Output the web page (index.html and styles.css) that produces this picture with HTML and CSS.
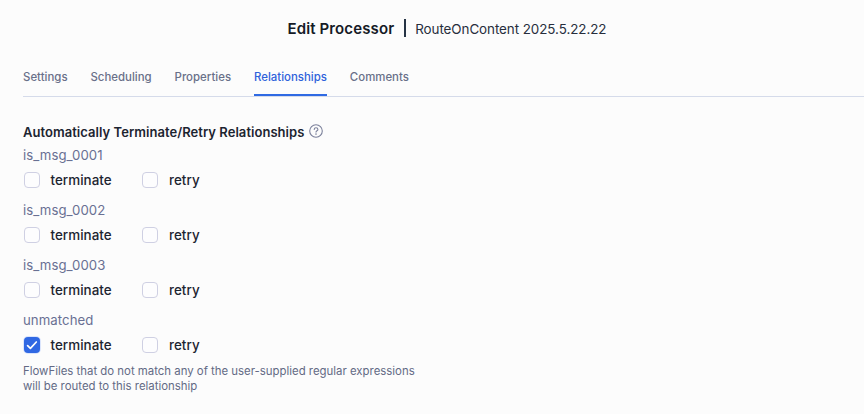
FILE: index.html
```html
<!DOCTYPE html>
<html lang="en">
<head>
<meta charset="utf-8">
<title>Edit Processor</title>
<link rel="stylesheet" href="styles.css">
</head>
<body>
<header class="header"><h1 class="title">Edit Processor</h1><span class="divider"></span><span class="name">RouteOnContent 2025.5.22.22</span></header>
<nav class="tabs">
<a class="tab">Settings</a><a class="tab">Scheduling</a><a class="tab">Properties</a><a class="tab active">Relationships</a><a class="tab">Comments</a>
</nav>
<main class="content">
<h2 class="heading"><span class="heading-text">Automatically Terminate/Retry Relationships</span>
<svg class="help" viewBox="0 0 14 14" fill="none" stroke="#7b809b" stroke-width="1.1" stroke-linecap="round"><circle cx="7" cy="7" r="6.3"/><path d="M5.2 5.4C5.3 4.3 6 3.8 7 3.8c1.1 0 1.9.6 1.9 1.6C8.9 6.7 7 6.8 7 8.1"/><circle cx="7" cy="10" r=".3"/></svg></h2>
<section class="rel"><div class="rel-name">is_msg_0001</div><div class="options"><label class="option first"><span class="box"></span><span>terminate</span></label><label class="option"><span class="box"></span><span>retry</span></label></div></section>
<section class="rel"><div class="rel-name">is_msg_0002</div><div class="options"><label class="option first"><span class="box"></span><span>terminate</span></label><label class="option"><span class="box"></span><span>retry</span></label></div></section>
<section class="rel"><div class="rel-name">is_msg_0003</div><div class="options"><label class="option first"><span class="box"></span><span>terminate</span></label><label class="option"><span class="box"></span><span>retry</span></label></div></section>
<section class="rel"><div class="rel-name">unmatched</div><div class="options"><label class="option first"><span class="box checked"><svg class="check" viewBox="0 0 16 16" fill="none" stroke="#fff" stroke-width="1.7" stroke-linecap="round" stroke-linejoin="round"><path d="M3.6 8.6l2.8 2.7L12.3 5"/></svg></span><span>terminate</span></label><label class="option"><span class="box"></span><span>retry</span></label></div></section>
<p class="note">FlowFiles that do not match any of the user-supplied regular expressions<br>will be routed to this relationship</p>
</main>
</body>
</html>
```
FILE: styles.css
```css
* { box-sizing: border-box; }
body { margin: 0; height: 414px; overflow: hidden; background: #fcfcfc; font-family: Inter, sans-serif; color: #1c2430; }
.header { display: flex; align-items: center; height: 58px; padding-left: 287.5px; white-space: nowrap; }
.title { margin: 0 0 1px; font-size: 15px; font-weight: 600; letter-spacing: .12px; color: #151a26; }
.divider { width: 2px; height: 18px; margin: 0 9.5px 2px 9.5px; background: #263445; }
.name { font-size: 13.4px; letter-spacing: -.06px; color: #272e3c; }
.tabs { display: flex; gap: 22.9px; height: 39px; margin-left: 23px; border-bottom: 1px solid #d5dbea; }
.tab { height: 38px; padding-top: 11px; font-size: 11.4px; line-height: 16px; font-weight: 500; letter-spacing: .02px; color: #697089; white-space: nowrap; }
.tab.active { color: #2f62db; border-bottom: 2px solid #2f6ae3; }
.content { padding: 25px 0 0 23px; }
.heading { display: flex; align-items: center; gap: 5px; height: 20px; margin: 0; font-size: 13px; font-weight: 600; letter-spacing: .045px; white-space: nowrap; }
.help { width: 14px; height: 14px; margin-bottom: 2px; }
.rel { height: 55px; padding-top: 4px; }
.rel-name { height: 18px; font-size: 13.2px; line-height: 18px; letter-spacing: .06px; color: #697093; }
.options { display: flex; height: 32px; align-items: center; padding-left: .5px; }
.option { display: flex; align-items: center; gap: 11px; font-size: 13.4px; font-weight: 450; letter-spacing: .04px; }
.first { width: 118.5px; }
.box { width: 16px; height: 16px; border: 1px solid #cfd0e3; border-radius: 4px; background: #fdfdfe; }
.checked { border: 0; background: #3068e3; box-shadow: 0 0 0 1px #dbe5fc; }
.check { display: block; width: 16px; height: 16px; }
.note { margin: 2px 0 0; font-size: 11.4px; line-height: 15px; color: #636a85; }
```
